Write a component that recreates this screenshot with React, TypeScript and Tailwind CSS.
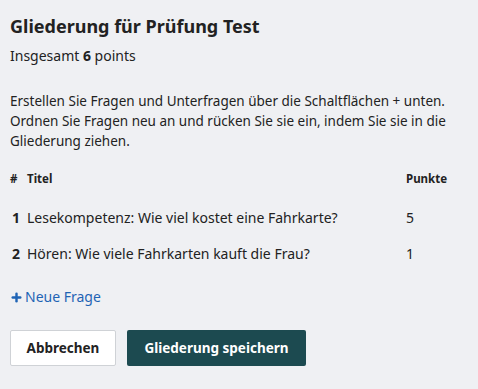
import { Plus } from "lucide-react"

const rows = [
    { n: 1, title: "Lesekompetenz: Wie viel kostet eine Fahrkarte?", pts: 5 },
    { n: 2, title: "Hören: Wie viele Fahrkarten kauft die Frau?", pts: 1 },
]

export default function App() {
    return (
        <div className="w-[478px] h-[389px] bg-[#eff0f3] px-[10px] pt-[14px] text-[#222] font-['Noto_Sans',sans-serif]">
            <h1 className="text-[18px] font-bold leading-[24px]">Gliederung für Prüfung Test</h1>
            <p className="text-[14px] leading-[18px] mt-[9px]">
                Insgesamt <span className="font-bold">6</span> points
            </p>

            <p className="text-[13.5px] leading-[20px] mt-[26px]">
                Erstellen Sie Fragen und Unterfragen über die Schaltflächen + unten. Ordnen Sie Fragen neu an und rücken Sie sie ein, indem Sie sie in die Gliederung ziehen.
            </p>

            {/* table */}
            <div className="mt-[20px] text-[11.5px] font-bold flex leading-[16px]">
                <span className="w-[17px]">#</span>
                <span className="flex-1">Titel</span>
                <span className="w-[62px]">Punkte</span>
            </div>
            <div className="mt-[23px] flex flex-col gap-[20px]">
                {rows.map((r) => (
                    <div key={r.n} className="flex text-[14px] leading-[16px]">
                        <span className="w-[17px] pl-[2px] font-bold">{r.n}</span>
                        <span className="flex-1">{r.title}</span>
                        <span className="w-[62px]">{r.pts}</span>
                    </div>
                ))}
            </div>

            <button className="mt-[26px] flex items-center gap-[2px] text-[14px] text-[#1f64b5] leading-[18px]">
                <Plus size={13} strokeWidth={4.5} />
                Neue Frage
            </button>

            <div className="mt-[24px] flex gap-[11px]">
                <button className="h-[36px] w-[106px] bg-white border border-[#cfd2d6] rounded-[2px] text-[13.5px] font-bold">
                    Abbrechen
                </button>
                <button className="h-[36px] w-[179px] bg-[#1c4a50] text-white rounded-[2px] text-[13.5px] font-bold">
                    Gliederung speichern
                </button>
            </div>
        </div>
    )
}
